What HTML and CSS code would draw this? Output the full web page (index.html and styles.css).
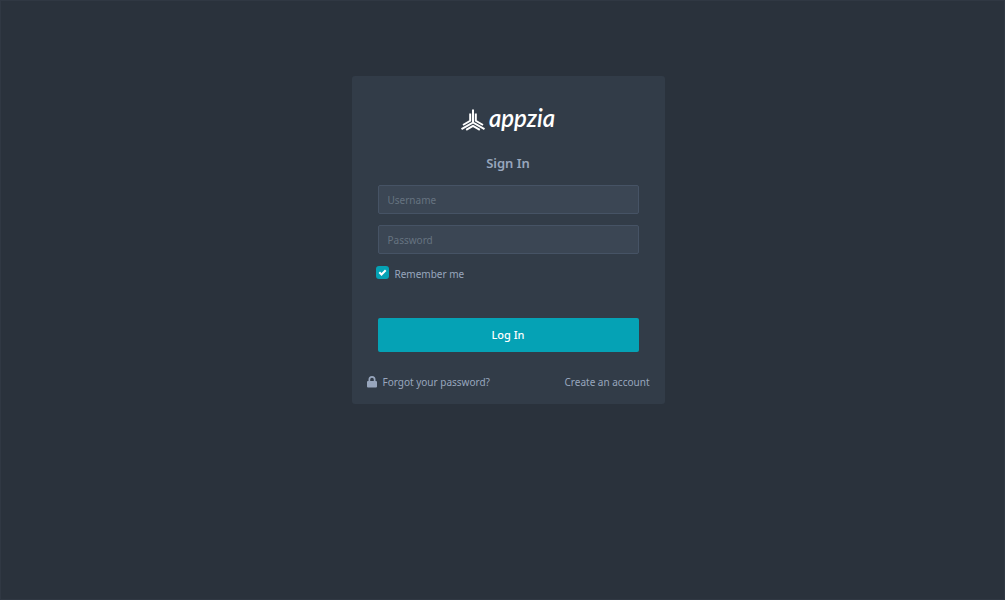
FILE: index.html
```html
<!DOCTYPE html>
<html lang="en">
<head>
<meta charset="utf-8">
<title>Appzia - Sign In</title>
<meta name="viewport" content="width=device-width, initial-scale=1">
<link rel="stylesheet" href="styles.css">
</head>
<body>
<main class="login-card">
  <a class="logo" href="#">
    <svg class="logo-mark" viewBox="0 0 24 22" aria-hidden="true">
      <g fill="none" stroke="#fff" stroke-width="2">
        <path d="M12 .5V13.5L.5 20.2M12 13.5L23.5 20.2"/>
        <path d="M9.2 4.4V11.8L2 16M14.8 4.4V11.8L22 16M5.2 20.9L12 16.9L18.8 20.9"/>
      </g>
    </svg>
    <span>appzia</span>
  </a>
  <h1 class="title">Sign In</h1>
  <form class="form">
    <input class="field" type="text" placeholder="Username" aria-label="Username">
    <input class="field" type="password" placeholder="Password" aria-label="Password">
    <div class="remember">
      <input class="check" id="remember" type="checkbox" checked>
      <label for="remember">Remember me</label>
    </div>
    <button class="submit" type="submit">Log In</button>
  </form>
  <nav class="links">
    <a class="link" href="#">
      <svg class="lock" viewBox="0 0 10 12" aria-hidden="true"><path fill="currentColor" fill-rule="evenodd" d="M1.5 5V3.6a3.5 3.5 0 0 1 7 0V5H9a1 1 0 0 1 1 1v4.5a1 1 0 0 1-1 1H1a1 1 0 0 1-1-1V6a1 1 0 0 1 1-1zM3.2 5h3.6V3.6a1.8 1.8 0 0 0-3.6 0z"/></svg>
      Forgot your password?</a>
    <a class="link" href="#">Create an account</a>
  </nav>
</main>
</body>
</html>
```
FILE: styles.css
```css
* { box-sizing: border-box; }
body {
  margin: 0;
  min-height: 100vh;
  padding: 75px 0 20px 11px;
  border: 1px solid #303843;
  background: #2a323c;
  color: #98a6bd;
  font: 10px/16px "Noto Sans", sans-serif;
}
.login-card {
  width: 100%;
  max-width: 313px;
  margin: 0 auto;
  padding: 29px 15px 14px;
  border-radius: 3px;
  background: #323c48;
}
.logo {
  display: flex;
  align-items: flex-end;
  justify-content: center;
  gap: 4px;
  color: #fff;
  font-family: Lato, sans-serif;
  font-size: 24px;
  font-style: italic;
  font-weight: 600;
  line-height: 26px;
  text-decoration: none;
}
.logo-mark { width: 24px; height: 22px; }
.title {
  margin: 22px 0 12px;
  text-align: center;
  font-size: 13px;
  font-weight: 600;
  line-height: 20px;
}
.form {
  display: flex;
  flex-direction: column;
  gap: 11px;
  padding: 0 11px;
}
.field {
  width: 100%;
  height: 29px;
  padding: 1px 9px 0;
  border: 1px solid #465365;
  border-radius: 2px;
  background: #3b4654;
  color: #98a6bd;
  font: inherit;
}
.field::placeholder { color: #667380; opacity: 1; }
.remember {
  display: flex;
  gap: 6px;
  margin: 1px 0 0 -2px;
}
.check {
  appearance: none;
  width: 13px;
  height: 13px;
  margin: 0;
  border-radius: 3px;
  background: #05a2b5 url("data:image/svg+xml,%3Csvg xmlns='http://www.w3.org/2000/svg' viewBox='0 0 13 13'%3E%3Cpath d='M3.3 6.3L5.5 8.5L9.7 4.3' fill='none' stroke='white' stroke-width='2'/%3E%3C/svg%3E");
}
.submit {
  height: 34px;
  margin-top: 25px;
  border: 0;
  border-radius: 2px;
  background: #05a2b5;
  color: #fff;
  font: 500 11px/16px "Noto Sans", sans-serif;
}
.links {
  display: flex;
  justify-content: space-between;
  margin-top: 22px;
}
.link {
  display: flex;
  align-items: center;
  gap: 6px;
  color: inherit;
  text-decoration: none;
}
.lock { width: 10px; height: 12px; }
```
